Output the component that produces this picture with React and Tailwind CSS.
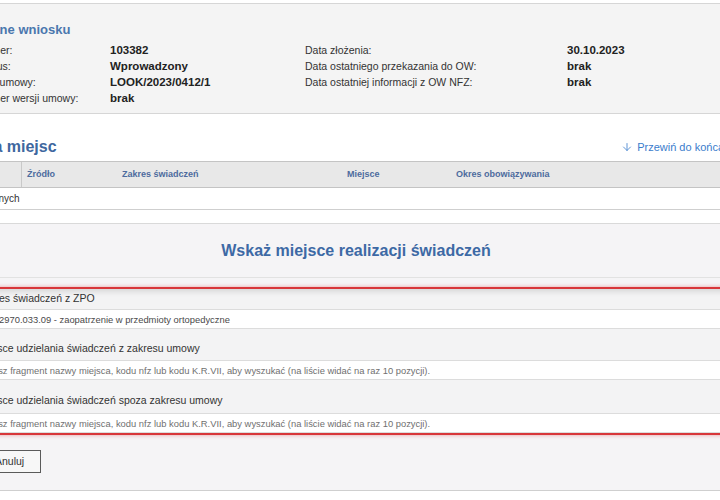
import React from 'react';
import { ArrowDown } from 'lucide-react';

// ─── Dane ─────────────────────────────────────────────────────────────────────

const details = [
  ['Numer:', '103382', 'Data złożenia:', '30.10.2023'],
  ['Status:', 'Wprowadzony', 'Data ostatniego przekazania do OW:', 'brak'],
  ['Kod umowy:', 'LOOK/2023/0412/1', 'Data ostatniej informacji z OW NFZ:', 'brak'],
  ['Numer wersji umowy:', 'brak', '', ''],
];

const PLACEHOLDER =
  'Wpisz fragment nazwy miejsca, kodu nfz lub kodu K.R.VII, aby wyszukać (na liście widać na raz 10 pozycji).';

// ─── Pole wyszukiwania ────────────────────────────────────────────────────────

const SearchField = ({ label, className = '', labelClass = 'leading-5' }) => (
  <div className={className}>
    <p className={`text-[10.5px] text-[#333] mb-[2px] ${labelClass}`}>{label}</p>
    <input
      type="text"
      placeholder={PLACEHOLDER}
      className="block w-full h-[20px] bg-white border border-[#dcdcdc] pl-[3px] text-[9.4px] text-[#444] placeholder:text-[#707070] outline-none"
    />
  </div>
);

// ─── Główny komponent ─────────────────────────────────────────────────────────

export default function App() {
  return (
    <div className="w-[720px] h-[500px] overflow-hidden bg-white font-['Liberation_Sans',Arial,sans-serif] text-[#333]">
      <div className="ml-[-22px] w-[756px] pt-[3px]">

        {/* Dane wniosku */}
        <section className="bg-[#f4f4f4] border-y border-[#d6d6d6] pt-[18px] pb-[7px]">
          <h2 className="pl-[5px] text-[13px] leading-4 font-bold text-[#4a77ae]">Dane wniosku</h2>
          <div className="mt-[4px] grid grid-cols-[132px_195px_262px_1fr] text-[10.5px] leading-4">
            {details.map(([l1, v1, l2, v2]) => (
              <React.Fragment key={l1}>
                <span>{l1}</span>
                <span className="font-bold text-[11.5px] text-[#222]">{v1}</span>
                <span>{l2}</span>
                <span className="font-bold text-[11.5px] text-[#222]">{v2}</span>
              </React.Fragment>
            ))}
          </div>
        </section>

        {/* Lista miejsc */}
        <section className="bg-white border-b border-[#d9d9d9] pt-[23px] pb-[13px]">
          <div className="flex items-center justify-between pr-[10px]">
            <h2 className="ml-[-13px] text-[16px] leading-5 font-bold text-[#3e679f]">Lista miejsc</h2>
            <a className="flex items-center gap-[4px] text-[11px] text-[#3a7ccc] cursor-pointer">
              <ArrowDown size={12} strokeWidth={1.6} />
              Przewiń do końca
            </a>
          </div>

          <div className="mt-[4px]">
            <div className="flex items-center h-[27px] bg-[#e8e8e8] border-y border-[#c4c4c4] text-[9px] font-bold text-[#4d6b9e]">
              <div className="w-[44px] h-full border-r border-[#c9c9c9]" />
              <div className="w-[95px] pl-[5px]">Źródło</div>
              <div className="w-[225px] pl-[5px]">Zakres świadczeń</div>
              <div className="w-[109px] pl-[5px]">Miejsce</div>
              <div className="flex-1 pl-[5px]">Okres obowiązywania</div>
            </div>
            <div className="flex items-center h-[22px] border-b border-[#cfcfcf] text-[10px]">
              <span className="ml-[-14px]">Brak danych</span>
            </div>
          </div>
        </section>

        {/* Wskaż miejsce */}
        <section className="bg-[#f5f4f6] border-b border-[#cfcfcf] pt-[17px] pb-[17px]">
          <h2 className="pb-[16px] border-b border-[#e2e2e2] text-center text-[16px] leading-5 font-bold text-[#3d69a5]">
            Wskaż miejsce realizacji świadczeń
          </h2>

          <div className="mt-[9px] ml-[-2px] bg-[#f3f3f4] border-2 border-[#d8363a] shadow-[0_0_4px_rgba(216,54,58,0.45),inset_0_5px_6px_-3px_rgba(0,0,0,0.14)]">
            <div>
              <p className="text-[10.5px] leading-[18px] mb-[2px]">Zakres świadczeń z ZPO</p>
              <input
                type="text"
                readOnly
                value="02.2970.033.09 - zaopatrzenie w przedmioty ortopedyczne"
                className="block w-full h-[20px] bg-white border border-[#dcdcdc] pl-[7px] text-[9.4px] text-[#4a4a4a] outline-none"
              />
            </div>
            <SearchField className="mt-[9px]" label="Miejsce udzielania świadczeń z zakresu umowy" />
            <SearchField className="mt-[10px]" labelClass="leading-5 pb-[1px]" label="Miejsce udzielania świadczeń spoza zakresu umowy" />
          </div>

          <button className="mt-[15px] h-[23px] px-4 bg-[#f7f7f7] border border-[#5a5a5a] text-[10.5px] text-[#333]">
            Anuluj
          </button>
        </section>
      </div>
    </div>
  );
}
